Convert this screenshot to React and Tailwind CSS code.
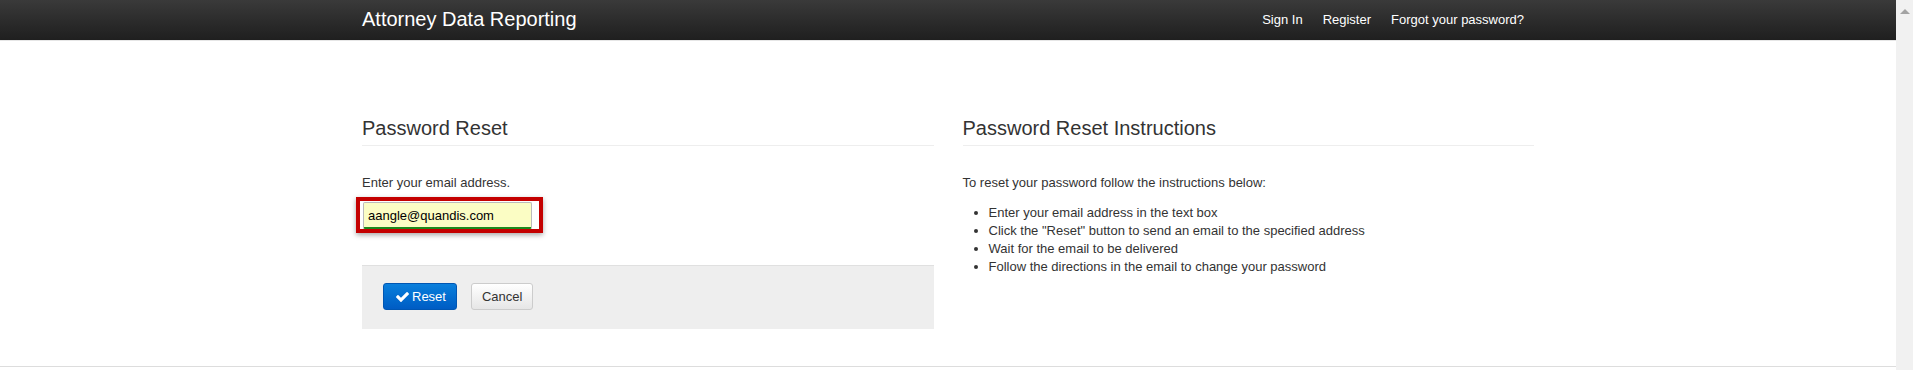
import { useState } from "react";

function CheckIcon() {
  return (
    <svg viewBox="121 334 1550 1188" className="w-[13px] h-[10px]" fill="currentColor">
      <path d="M1671 566q0 40-28 68l-724 724-136 136q-28 28-68 28t-68-28l-136-136-362-362q-28-28-28-68t28-68l136-136q28-28 68-28t68 28l294 295 656-657q28-28 68-28t68 28l136 136q28 28 28 68z" />
    </svg>
  );
}

export default function App() {
  const [email, setEmail] = useState("aangle@quandis.com");
  const steps = [
    "Enter your email address in the text box",
    'Click the "Reset" button to send an email to the specified address',
    "Wait for the email to be delivered",
    "Follow the directions in the email to change your password",
  ];

  return (
    <div
      className="flex w-full h-[370px] bg-white text-[#333] overflow-hidden"
      style={{ fontFamily: '"Liberation Sans", Arial, sans-serif' }}
    >
      <div className="flex-1 flex flex-col">
        <nav className="h-[41px] bg-gradient-to-b from-[#3a3a3a] to-[#1f1f1f] border-b border-[#e6e6e6]">
          <div className="w-[1172px] mx-auto h-full flex items-center justify-between">
            <a className="text-white text-[20px] leading-[22px] -mt-[2px]">Attorney Data Reporting</a>
            <ul className="flex items-center text-white text-[13px]">
              <li className="px-[10px]">Sign In</li>
              <li className="px-[10px]">Register</li>
              <li className="px-[10px]">Forgot your password?</li>
            </ul>
          </div>
        </nav>

        <div className="w-[1172px] mx-auto mt-[76px] grid grid-cols-2 gap-[29px] text-[13px] leading-[18px]">
          <div>
            <h2 className="text-[20px] leading-[22px] pb-[6px] border-b border-[#eee]">Password Reset</h2>
            <p className="mt-[28px] mb-[5px]">Enter your email address.</p>
            <div className="inline-block -ml-[6px] border-4 border-[#c40000] pt-[1px] pl-[3px] pr-[7px] shadow-[0_2px_5px_rgba(0,0,0,0.35)]">
              <input
                className="block w-[169px] h-[27px] px-[4px] text-[13px] text-black bg-[#fbfdc4] border border-[#bbb] border-b-2 border-b-[#1c8a1c] rounded-[2px] outline-none"
                style={{ fontFamily: '"Liberation Sans", Arial, sans-serif' }}
                value={email}
                onChange={(e) => setEmail(e.target.value)}
              />
            </div>
            <div className="mt-[32px] bg-[#eee] border-t border-[#e0e0e0] pt-[17px] pb-[19px] pl-[21px] flex gap-[14px]">
              <button className="h-[27px] pl-[12px] pr-[10px] flex items-center gap-[3px] text-white text-[13px] rounded-[3px] border border-[#0056b3] bg-gradient-to-b from-[#0a7fdc] to-[#005cc4]">
                <CheckIcon />
                Reset
              </button>
              <button className="h-[27px] px-[10px] text-[#333] text-[13px] rounded-[3px] border border-[#ccc] bg-gradient-to-b from-white to-[#e6e6e6]">
                Cancel
              </button>
            </div>
          </div>

          <div>
            <h2 className="text-[20px] leading-[22px] pb-[6px] border-b border-[#eee]">Password Reset Instructions</h2>
            <p className="mt-[28px]">To reset your password follow the instructions below:</p>
            <ul className="mt-[12px] list-disc pl-[26px]">
              {steps.map((s) => (
                <li key={s}>{s}</li>
              ))}
            </ul>
          </div>
        </div>

        <div className="mt-auto mb-[3px] border-t border-[#ddd]" />
      </div>

      <div className="w-[17px] bg-[#f1f1f1] flex justify-center pt-[9px]">
        <div className="w-0 h-0 border-l-[5px] border-r-[5px] border-b-[5px] border-l-transparent border-r-transparent border-b-[#a3a3a3]" />
      </div>
    </div>
  );
}
